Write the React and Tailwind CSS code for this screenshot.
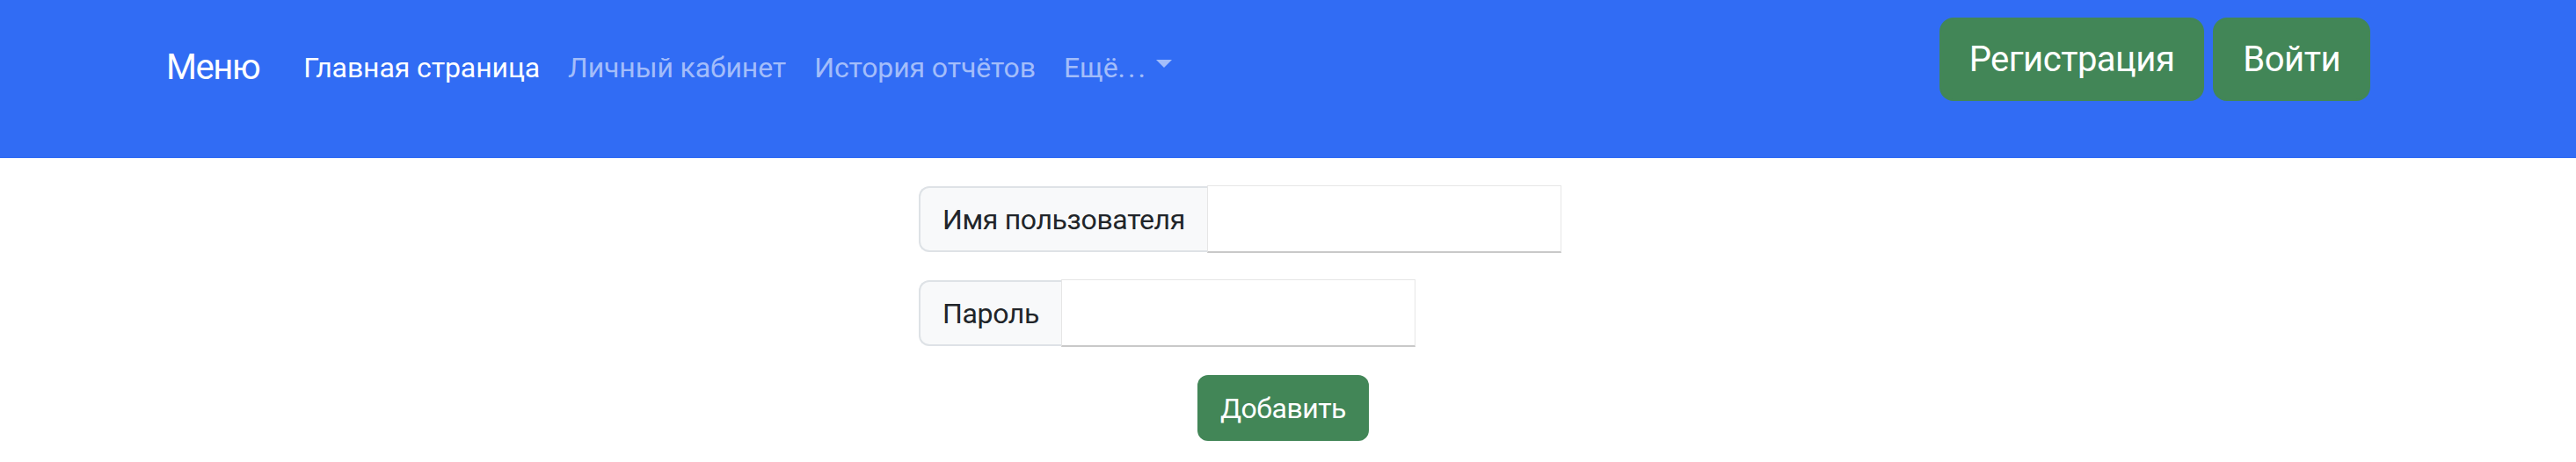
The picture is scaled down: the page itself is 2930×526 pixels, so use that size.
import React from 'react';

const links = [
  { label: 'Главная страница', active: true },
  { label: 'Личный кабинет' },
  { label: 'История отчётов' },
];

function Field({ label, mb }) {
  return (
    <div className={`flex items-center ${mb}`}>
      <span className="h-[75px] flex items-center px-[25px] bg-[#f8f9fa] border-2 border-r-0 border-[#dee2e6] rounded-l-[12px] text-[32px] tracking-[-0.35px] text-[#212529]">
        {label}
      </span>
      <input
        type="text"
        className="h-[77px] w-[403px] bg-white border border-[#e6e6e6] border-b-2 border-b-[#c9c9c9] outline-none"
      />
    </div>
  );
}

export default function App() {
  return (
    <div className="w-[2930px] h-[526px] bg-white font-['Roboto',sans-serif]">
      {/* Navbar */}
      <nav className="h-[180px] bg-[#316cf4] flex items-start">
        <div className="h-[154px] flex items-center pl-[189px]">
          <span className="text-[40px] leading-[60px] tracking-[-1.4px] text-white mr-[34px]">Меню</span>
          {links.map(link => (
            <a
              key={link.label}
              className={`px-[16px] text-[32px] leading-[48px] tracking-[-0.1px] ${link.active ? 'text-white' : 'text-[#a3bdfa]'}`}
            >
              {link.label}
            </a>
          ))}
          <a className="px-[16px] text-[32px] leading-[48px] tracking-[-0.1px] text-[#a3bdfa] flex items-center">
            Ещё<span className="tracking-[3px]">...</span>
            <span className="ml-[9px] mb-[10px] w-0 h-0 border-t-[9px] border-t-[#a3bdfa] border-x-[9px] border-x-transparent" />
          </a>
        </div>
        <div className="ml-auto mr-[234px] mt-[20px] flex gap-[10px]">
          <button className="h-[95px] px-[32px] bg-[#428657] border-2 border-[#428657] rounded-[16px] text-white text-[40px] leading-[60px] tracking-[-0.5px]">
            Регистрация
          </button>
          <button className="h-[95px] px-[32px] bg-[#428657] border-2 border-[#428657] rounded-[16px] text-white text-[40px] leading-[60px] tracking-[-0.5px]">
            Войти
          </button>
        </div>
      </nav>

      {/* Form */}
      <div className="pt-[31px] pl-[1045px]">
        <Field label="Имя пользователя" mb="mb-[30px]" />
        <Field label="Пароль" mb="mb-[32px]" />
      </div>
      <div className="flex justify-center pr-[11px]">
        <button className="h-[75px] px-[26px] bg-[#428657] rounded-[12px] text-white text-[32px] leading-[48px] tracking-[-0.5px]">
          Добавить
        </button>
      </div>
    </div>
  );
}
